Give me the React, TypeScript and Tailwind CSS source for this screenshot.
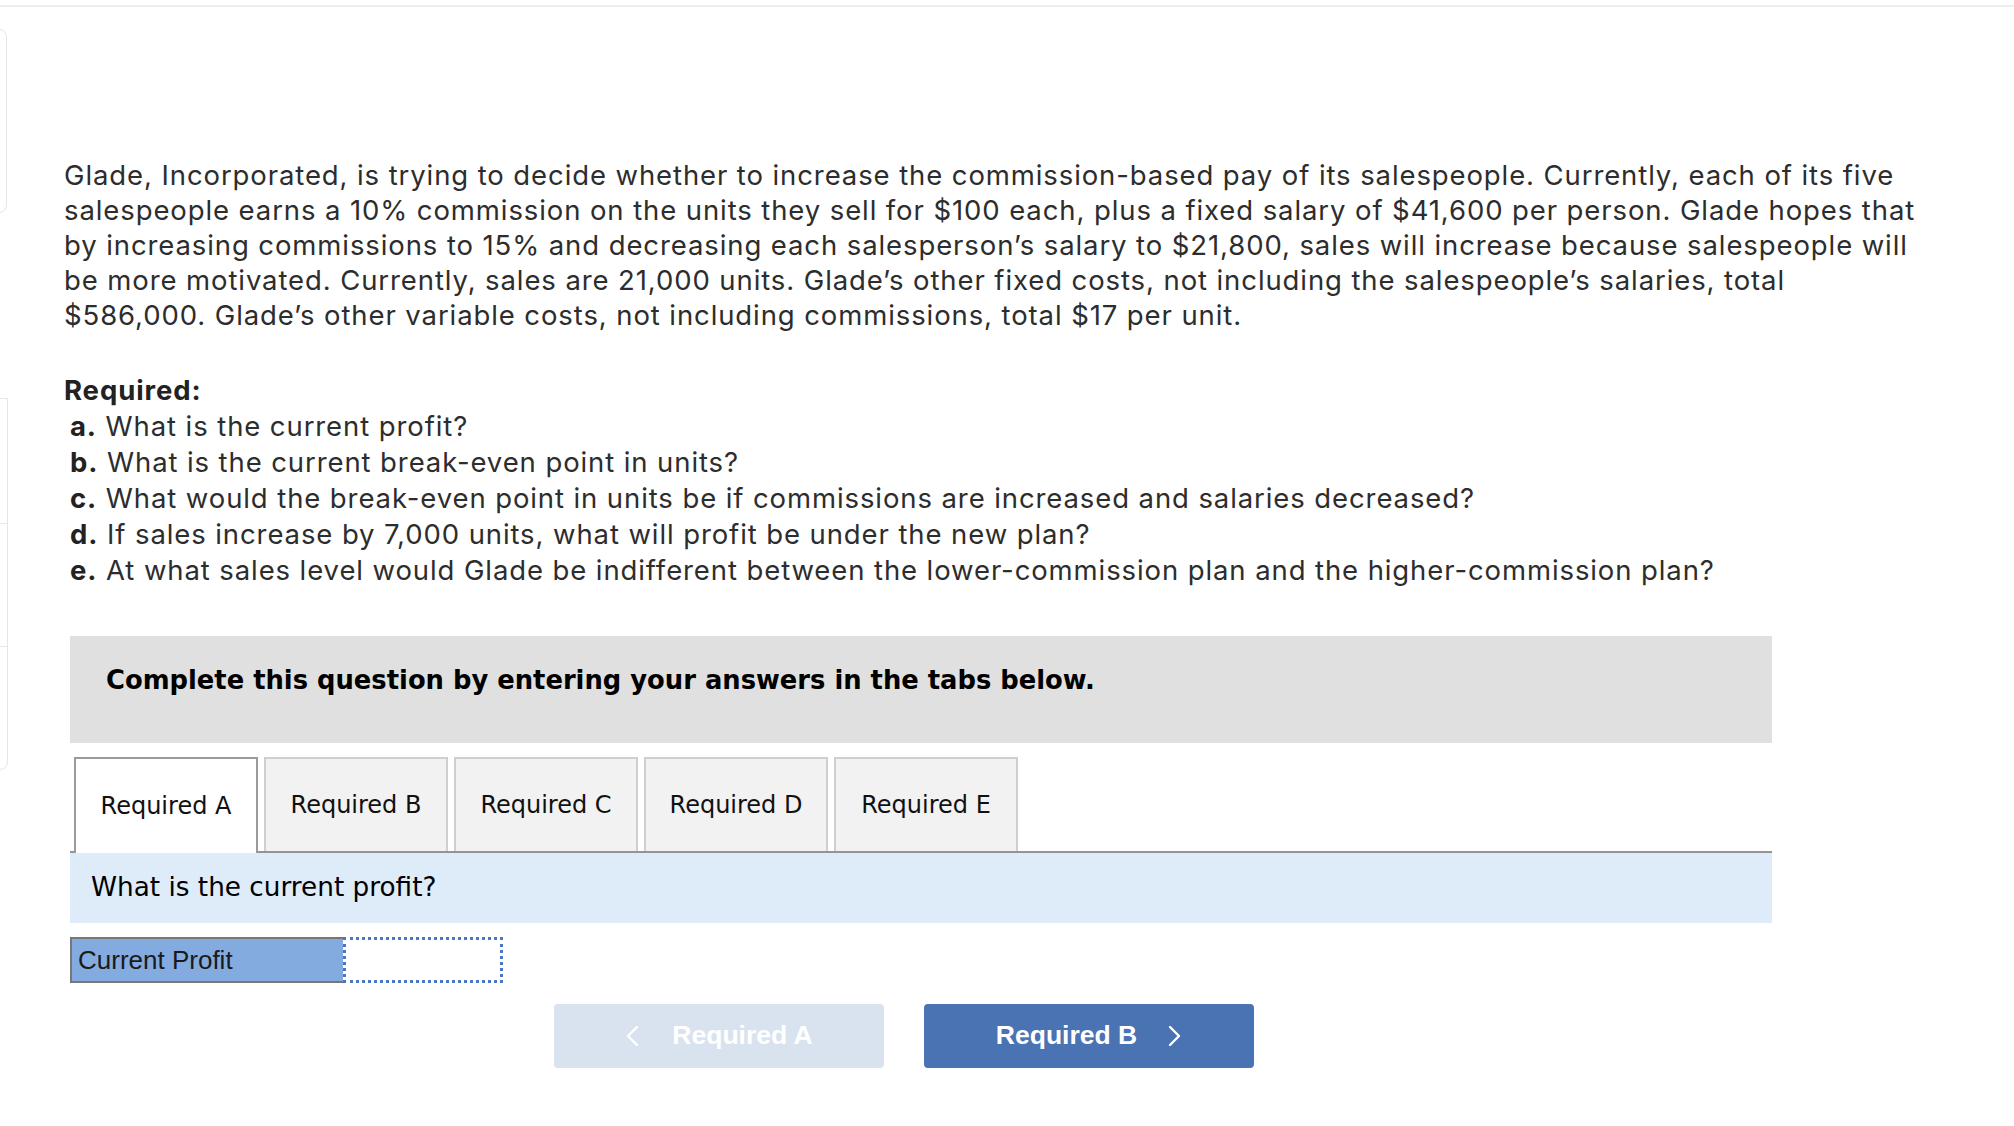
import React from 'react';

// ─── Data ─────────────────────────────────────────────────────────────────────

const PARAGRAPH = [
  'Glade, Incorporated, is trying to decide whether to increase the commission-based pay of its salespeople. Currently, each of its five',
  'salespeople earns a 10% commission on the units they sell for $100 each, plus a fixed salary of $41,600 per person. Glade hopes that',
  'by increasing commissions to 15% and decreasing each salesperson’s salary to $21,800, sales will increase because salespeople will',
  'be more motivated. Currently, sales are 21,000 units. Glade’s other fixed costs, not including the salespeople’s salaries, total',
  '$586,000. Glade’s other variable costs, not including commissions, total $17 per unit.',
];

const REQUIRED = [
  { key: 'a.', text: 'What is the current profit?' },
  { key: 'b.', text: 'What is the current break-even point in units?' },
  { key: 'c.', text: 'What would the break-even point in units be if commissions are increased and salaries decreased?' },
  { key: 'd.', text: 'If sales increase by 7,000 units, what will profit be under the new plan?' },
  { key: 'e.', text: 'At what sales level would Glade be indifferent between the lower-commission plan and the higher-commission plan?' },
];

const TABS = ['Required A', 'Required B', 'Required C', 'Required D', 'Required E'];

const BODY_FONT = { fontFamily: 'Inter, "Open Sans", sans-serif' };

// ─── Icons ────────────────────────────────────────────────────────────────────

function Chevron({ dir }: { dir: 'left' | 'right' }) {
  return (
    <svg width="14" height="22" viewBox="0 0 14 22" fill="none">
      <polyline
        points={dir === 'left' ? '12,2 3,11 12,20' : '2,2 11,11 2,20'}
        stroke="currentColor"
        strokeWidth="2.4"
        strokeLinecap="round"
        strokeLinejoin="round"
      />
    </svg>
  );
}

// ─── Page ─────────────────────────────────────────────────────────────────────

export default function App() {
  return (
    <div className="relative min-h-screen w-full overflow-hidden bg-white">
      <div className="mt-[5px] h-[2px] w-full bg-[#ededed]" />

      {/* side panel peeking in from the left edge */}
      <div className="absolute left-[-300px] top-[29px] h-[184px] w-[307px] rounded-lg border border-[#e6e6e6]" />
      <div className="absolute left-[-300px] top-[398px] flex h-[372px] w-[308px] flex-col rounded-b-lg border border-[#e6e6e6]">
        <div className="h-[125px] border-b border-[#e6e6e6]" />
        <div className="h-[123px] border-b border-[#e6e6e6]" />
        <div className="flex-1" />
      </div>

      <div className="pl-[64px] pt-[151px]">
        <div className="text-[27.5px] leading-[35px] tracking-[0.9px] text-[#2d2d2d] whitespace-nowrap [font-variant-ligatures:none]" style={BODY_FONT}>
          {PARAGRAPH.map((line) => (
            <div key={line}>{line}</div>
          ))}
        </div>

        <div className="mt-[39px] text-[27.5px] leading-[36px] tracking-[0.9px] text-[#2d2d2d] whitespace-nowrap [font-variant-ligatures:none]" style={BODY_FONT}>
          <div className="font-bold text-[#222222]">Required:</div>
          {REQUIRED.map((r) => (
            <div key={r.key} className="pl-[6px]">
              <span className="font-bold text-[#222222]">{r.key}</span> {r.text}
            </div>
          ))}
        </div>

        <div className="ml-[6px] w-[1702px]" style={{ fontFamily: '"DejaVu Sans", Verdana, sans-serif' }}>
          <div className="mt-[48px] h-[107px] bg-[#e0e0e0] pl-[36px] pt-[29px]">
            <p className="text-[25.8px] font-bold leading-[30px] text-black">
              Complete this question by entering your answers in the tabs below.
            </p>
          </div>

          {/* tabs */}
          <div className="mt-[14px] flex h-[96px] gap-[6px] border-b-2 border-[#949494] pl-[4px]">
            {TABS.map((t, i) => (
              <div
                key={t}
                className={
                  i === 0
                    ? 'mb-[-2px] flex h-[96px] w-[184px] items-center justify-center border-2 border-b-0 border-[#9a9a9a] bg-white text-[24px] text-[#111111]'
                    : 'flex h-[94px] w-[184px] items-center justify-center border-2 border-b-0 border-[#cfcfcf] bg-[#f2f2f2] text-[24px] text-[#111111]'
                }
              >
                {t}
              </div>
            ))}
          </div>

          <div className="flex h-[70px] items-center bg-[#deebf8] pl-[21px] text-[26.3px] text-black">
            What is the current profit?
          </div>

          {/* answer row */}
          <div className="mt-[14px] flex h-[46px]" style={{ fontFamily: '"Liberation Sans", Arial, sans-serif' }}>
            <div className="flex w-[273px] items-center border-y-2 border-l-2 border-[#777777] bg-[#84abe0] pl-[6px] text-[26px] text-[#1a1a1a]">
              Current Profit
            </div>
            <div className="w-[160px] border-[3px] border-dotted border-[#4a76c4] bg-white" />
          </div>

          {/* nav buttons */}
          <div className="ml-[484px] mt-[21px] flex gap-[40px]" style={{ fontFamily: '"Liberation Sans", Arial, sans-serif' }}>
            <button className="flex h-[64px] w-[330px] items-center justify-center gap-[33px] rounded-[4px] bg-[#d9e3ef] text-[26.5px] font-bold text-white">
              <Chevron dir="left" />
              <span>Required A</span>
            </button>
            <button className="flex h-[64px] w-[330px] items-center justify-center gap-[31px] rounded-[4px] bg-[#4973b2] text-[26.5px] font-bold text-white">
              <span>Required B</span>
              <Chevron dir="right" />
            </button>
          </div>
        </div>
      </div>
    </div>
  );
}
